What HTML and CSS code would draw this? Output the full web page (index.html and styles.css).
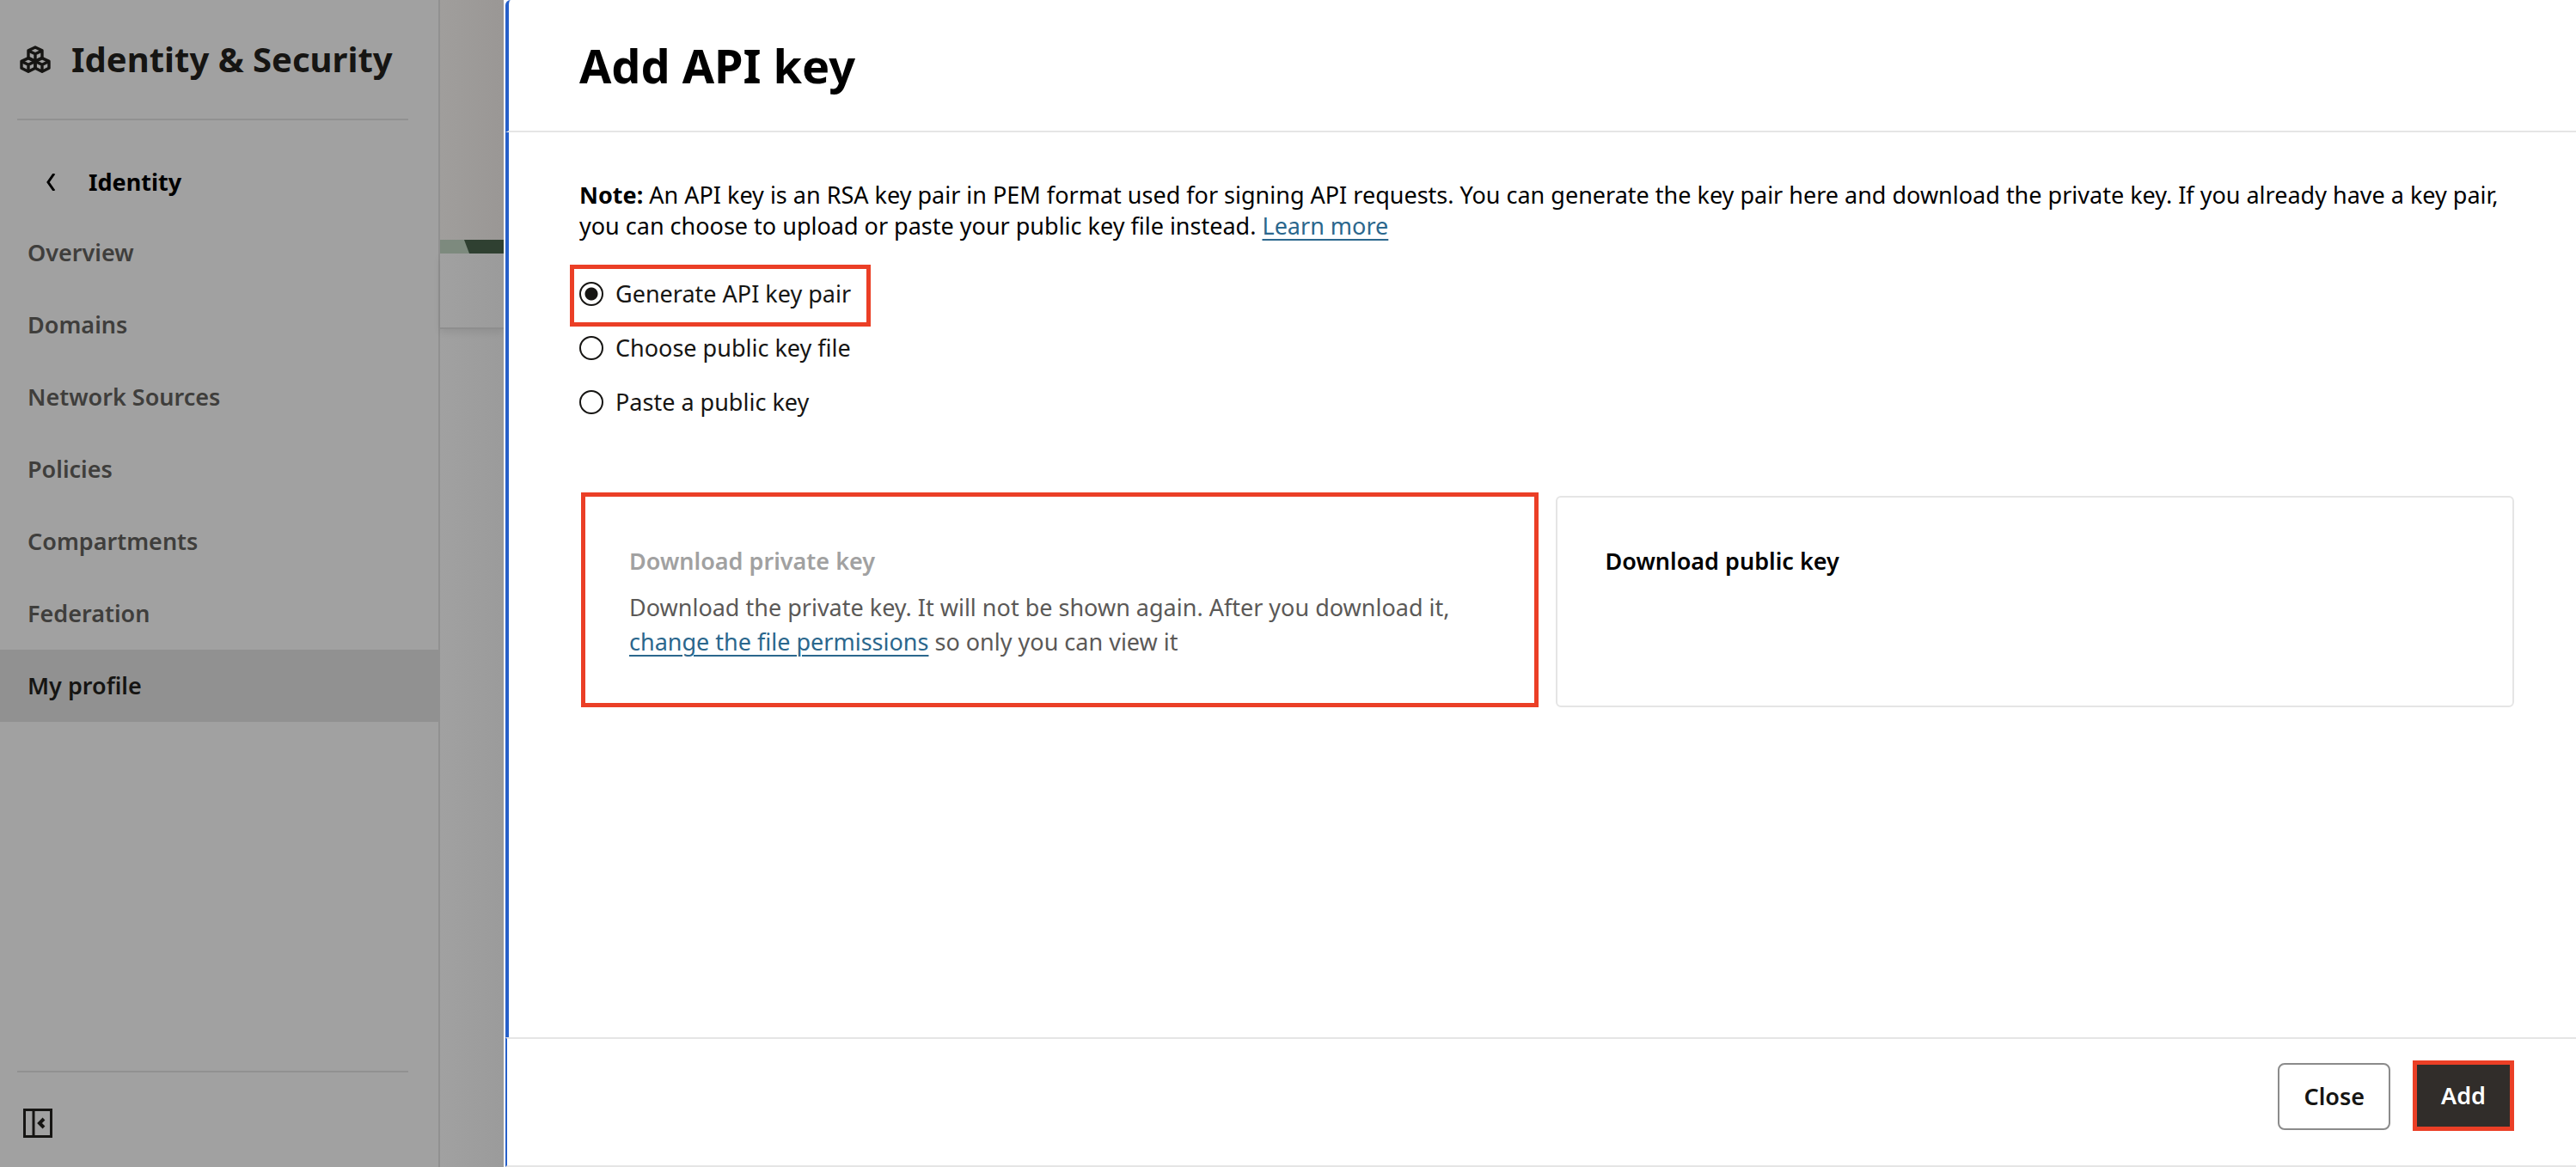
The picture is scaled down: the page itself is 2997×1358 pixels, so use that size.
FILE: index.html
```html
<!DOCTYPE html>
<html lang="en">
<head>
<meta charset="utf-8">
<title>Add API key</title>
<link rel="stylesheet" href="styles.css">
</head>
<body>
<div class="app">
  <nav class="sidebar" aria-label="Identity &amp; Security">
    <div class="sidebar-head">
      <svg class="service-icon" viewBox="0 0 36 32" aria-hidden="true">
        <g fill="none" stroke="currentColor" stroke-width="3.4" stroke-linejoin="round">
          <path d="M18 2l8 3.800v8.400l-8 4-8-4V5.800z"/>
          <path d="M10 6l8 3.800L26 6M18 9.800v8"/>
          <path d="M10 14.600l8 3.800v7.800l-8 4-8-4v-7.800z"/>
          <path d="M2 18.400l8 3.800 8-3.800M10 22.200v8"/>
          <path d="M26 14.600l8 3.800v7.800l-8 4-8-4v-7.800z"/>
          <path d="M18 18.400l8 3.800 8-3.800M26 22.200v8"/>
        </g>
      </svg>
      <h2 class="service-title">Identity &amp; Security</h2>
    </div>
    <a class="back" href="#">
      <svg class="back-icon" viewBox="0 0 12 20" aria-hidden="true"><path d="M10 0L3 10l7 10" fill="none" stroke="currentColor" stroke-width="3"/></svg>
      Identity
    </a>
    <ul class="menu">
      <li><a class="menu-link" href="#">Overview</a></li>
      <li><a class="menu-link" href="#">Domains</a></li>
      <li><a class="menu-link" href="#">Network Sources</a></li>
      <li><a class="menu-link" href="#">Policies</a></li>
      <li><a class="menu-link" href="#">Compartments</a></li>
      <li><a class="menu-link" href="#">Federation</a></li>
      <li><a class="menu-link menu-link-current" href="#" aria-current="page">My profile</a></li>
    </ul>
    <div class="sidebar-foot">
      <button class="collapse" type="button" aria-label="Collapse menu">
        <svg class="collapse-icon" viewBox="0 0 34 34" aria-hidden="true"><g fill="none" stroke="currentColor" stroke-width="3"><path d="M1.500 1.500h31v31h-31z"/><path d="M12 2v30"/><path d="M24 12l-5 5 5 5" stroke-width="4"/></g></svg>
      </button>
    </div>
  </nav>

  <main class="page">
    <div class="page-banner"></div>
    <svg class="page-strip" viewBox="0 0 74 16" preserveAspectRatio="none" aria-hidden="true"><path fill="#7d8a7e" d="M0 0h74v16H0z"/><path fill="#2f4031" d="M28 0h46v16H34z"/></svg>
    <div class="page-card"></div>
  </main>

  <section class="drawer" role="dialog" aria-labelledby="drawer-title">
    <header class="drawer-head">
      <h1 class="drawer-title" id="drawer-title">Add API key</h1>
    </header>
    <form class="drawer-body" id="key-form">
      <p class="note"><strong>Note:</strong> An API key is an RSA key pair in PEM format used for signing API requests. You can generate the key pair here and download the private key. If you already have a key pair, you can choose to upload or paste your public key file instead. <a class="link" href="#">Learn more</a></p>
      <div class="options">
        <label class="option option-marked"><input class="radio" type="radio" name="source" checked>Generate API key pair</label>
        <label class="option"><input class="radio" type="radio" name="source">Choose public key file</label>
        <label class="option"><input class="radio" type="radio" name="source">Paste a public key</label>
      </div>
      <div class="cards">
        <article class="card card-marked">
          <h3 class="card-title card-title-off">Download private key</h3>
          <p class="card-text">Download the private key. It will not be shown again. After you download it, <a class="link" href="#">change the file permissions</a> so only you can view it</p>
        </article>
        <article class="card">
          <h3 class="card-title">Download public key</h3>
        </article>
      </div>
    </form>
    <footer class="drawer-foot">
      <button class="btn" type="button">Close</button>
      <button class="btn btn-primary" type="submit" form="key-form">Add</button>
    </footer>
  </section>
</div>
</body>
</html>
```
FILE: styles.css
```css
* { box-sizing: border-box; }

body {
  margin: 0;
  background: #a1a1a1;
  color: #000;
  font-family: "Noto Sans", "Open Sans", sans-serif;
  font-size: 27px;
  line-height: 36px;
}

h1, h2, h3, p, ul { margin: 0; padding: 0; }

.app {
  display: flex;
  min-height: 100vh;
}

/* Side navigation, dimmed behind the drawer */
.sidebar {
  display: flex;
  flex-direction: column;
  flex: 0 0 512px;
  border-right: 2px solid #919191;
  background: #a1a1a1;
}

.sidebar-head {
  display: flex;
  align-items: center;
  gap: 24px;
  height: 140px;
  margin: 0 35px 28px 20px;
  padding-left: 3px;
  border-bottom: 2px solid #919191;
  color: #161513;
}

.service-icon { width: 36px; height: 32px; }

.service-title {
  font-size: 40px;
  line-height: 56px;
  font-weight: 700;
}

.back {
  display: flex;
  align-items: center;
  gap: 38px;
  height: 84px;
  padding: 3px 0 0 53px;
  color: #000;
  font-weight: 700;
  text-decoration: none;
}

.back-icon { width: 12px; height: 20px; }

.menu { list-style: none; }

.menu-link {
  display: flex;
  align-items: center;
  height: 84px;
  padding-left: 32px;
  color: #3f3e3c;
  font-weight: 600;
  text-decoration: none;
}

.menu-link-current {
  background: #919191;
  color: #161513;
}

.sidebar-foot {
  margin: auto 35px 0 20px;
  height: 112px;
  padding: 42px 7px 0;
  border-top: 2px solid #919191;
}

.collapse {
  display: block;
  padding: 0;
  border: 0;
  background: none;
  color: #161513;
}

.collapse-icon { display: block; width: 34px; height: 34px; }

/* Strip of the page that stays visible beside the drawer */
.page {
  flex: 0 0 74px;
  background: linear-gradient(to right, #a1a1a1, #9b9b9b);
}

.page-banner {
  height: 279px;
  background: linear-gradient(to right, #a09e9c, #9a9795);
}

.page-strip { display: block; width: 100%; height: 16px; }

.page-card {
  height: 88px;
  border-bottom: 2px solid #8e8e8e;
  box-shadow: 0 4px 8px rgba(0, 0, 0, .08);
}

/* Drawer */
.drawer {
  display: flex;
  flex-direction: column;
  flex: 1 1 0;
  min-width: 0;
  border-left: 2px solid #fff;
  background: #fff;
}

.drawer-head {
  display: flex;
  align-items: center;
  height: 154px;
  padding-left: 82px;
  border-left: 4px solid #265fc9;
  border-bottom: 2px solid #e5e5e5;
  border-top-left-radius: 6px;
}

.drawer-title {
  font-size: 54px;
  line-height: 72px;
  font-weight: 700;
}

.drawer-body {
  flex: 1;
  padding: 55px 72px 40px 82px;
  border-left: 4px solid #265fc9;
}

.link {
  color: #2b678d;
  text-decoration-thickness: 2px;
  text-underline-offset: 5px;
}

.options {
  display: flex;
  flex-direction: column;
  align-items: flex-start;
  margin: 27px 0 0 -11px;
}

.option {
  display: flex;
  align-items: center;
  gap: 14px;
  height: 63px;
  padding: 0 11px;
  color: #161513;
}

.option-marked {
  height: 72px;
  margin-bottom: -7px;
  padding: 0 18px 4px 6px;
  border: 5px solid #eb3f26;
}

.radio {
  appearance: none;
  width: 28px;
  height: 28px;
  margin: 0;
  border: 2px solid #161513;
  border-radius: 50%;
  background: #fff;
}

.radio:checked {
  background: radial-gradient(circle, #161513 7px, #fff 8px);
}

.cards {
  display: grid;
  grid-template-columns: 1fr 1fr;
  gap: 20px;
  margin-top: 74px;
}

.card {
  min-height: 246px;
  margin: 4px 0 0;
  padding: 54px 56px;
  border: 2px solid #e5e5e5;
  border-radius: 6px;
}

.card-marked {
  margin: 0 0 0 2px;
  padding: 55px 53px 45px 51px;
  border: 5px solid #eb3f26;
  border-radius: 0;
}

.card-title {
  font-size: 27px;
  line-height: 40px;
  font-weight: 600;
}

.card-title-off { color: #a1a1a1; }

.card-text {
  margin-top: 14px;
  color: #5b5957;
  line-height: 40px;
}

.drawer-foot {
  display: flex;
  align-items: flex-start;
  justify-content: flex-end;
  gap: 26px;
  height: 151px;
  padding: 25px 72px 0;
  border: 2px solid #e5e5e5;
  border-width: 2px 0;
  border-left: 2px solid #265fc9;
}

.btn {
  height: 78px;
  margin-top: 3px;
  padding: 0 28px;
  border: 2px solid #8b8b8b;
  border-radius: 8px;
  background: #fff;
  color: #161513;
  font: 600 27px/36px "Noto Sans", "Open Sans", sans-serif;
}

.btn-primary {
  height: 82px;
  margin-top: 0;
  border: 5px solid #eb3f26;
  border-radius: 0;
  background: #312d2a;
  color: #fff;
}
```
